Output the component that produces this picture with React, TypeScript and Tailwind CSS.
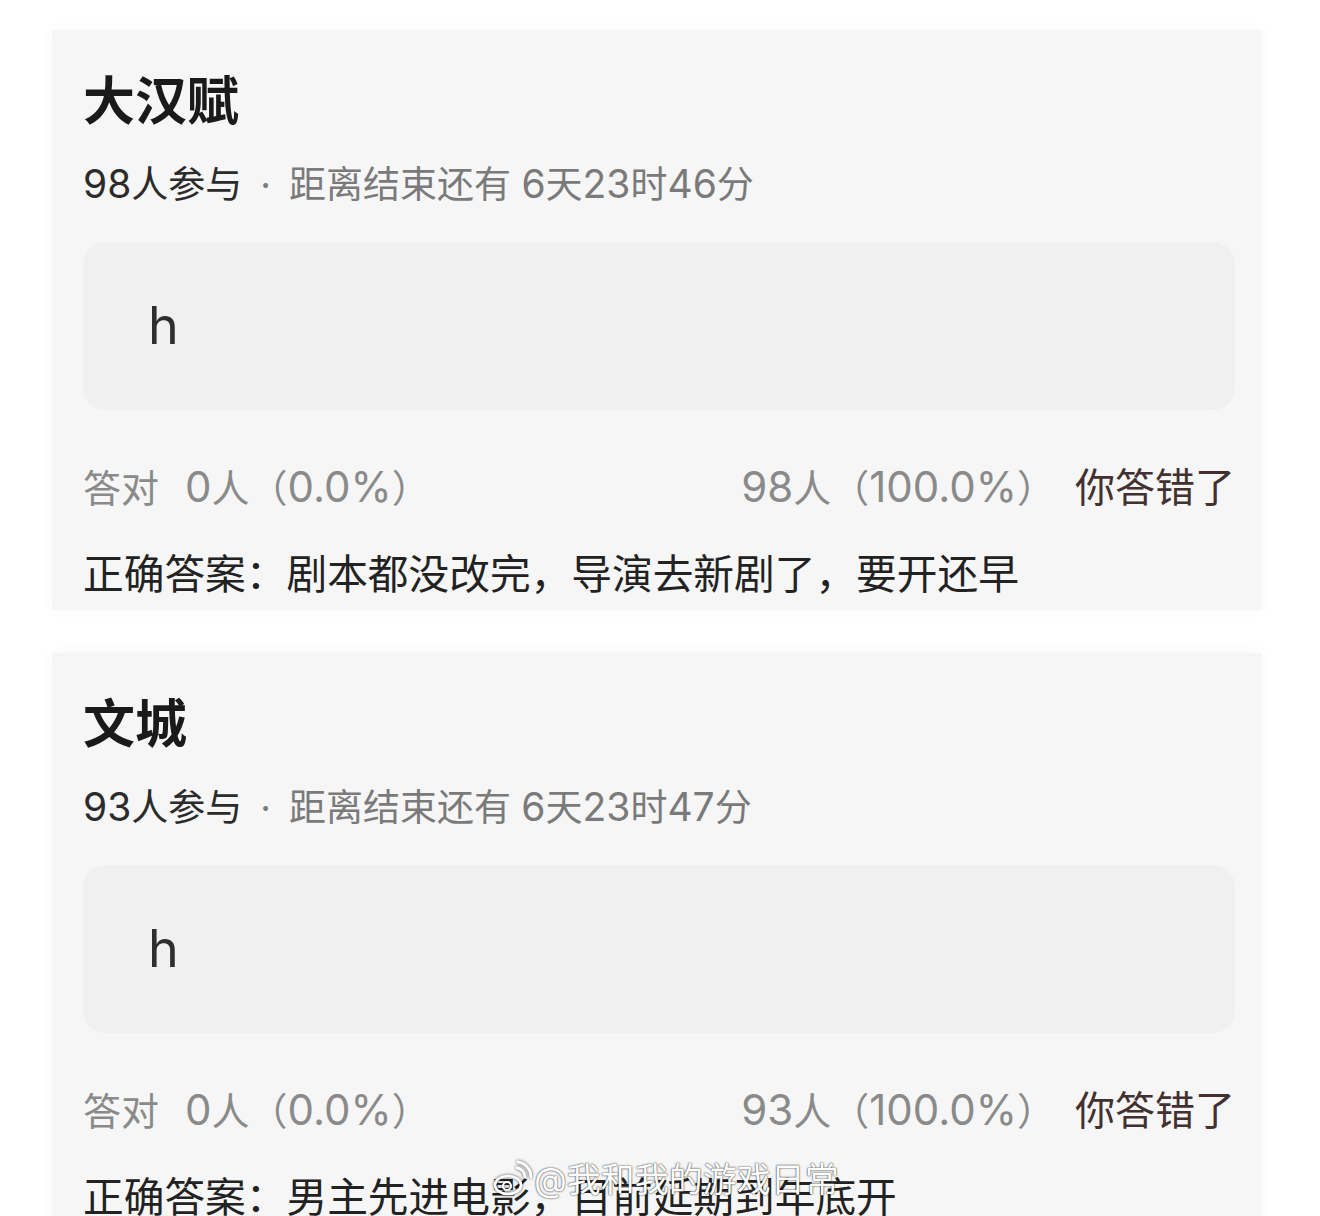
import React from 'react';

interface QuizCardProps {
  title: string;
  joined: number;
  remaining: string;
  answer: string;
  correct: number;
  correctRate: string;
  wrong: number;
  wrongRate: string;
}

// Inter for the digits and latin letters, Noto CJK for everything else
const FONT = "font-['Inter','Noto_Sans_CJK_SC',sans-serif]";

// digits sit a little larger than the CJK text around them
const Num = ({ children, size }: { children: React.ReactNode; size: 'sm' | 'lg' }) => (
  <span className={size === 'sm' ? 'text-[39px] leading-none' : 'text-[42px] leading-none'}>
    {children}
  </span>
);

const QuizCard = ({
  title,
  joined,
  remaining,
  answer,
  correct,
  correctRate,
  wrong,
  wrongRate,
}: QuizCardProps) => {
  const [days, rest] = remaining.split('天');
  const [hours, mins] = rest.replace('分', '').split('时');

  return (
    <div className="w-[1210px] ml-[52px] bg-[#f6f6f6] pl-[31px] pr-[27px] pt-[46px] pb-[14px] shadow-[0_0_14px_rgba(0,0,0,0.035)]">
      <h2 className="text-[52px] leading-none font-bold text-[#1a1a1a]">{title}</h2>
      <p className="mt-[36px] h-[37px] text-[37px] leading-none text-[#7a7a7a] whitespace-nowrap">
        <span className="text-[#2b2b2b]">
          <Num size="sm">{joined}</Num>人参与
        </span>
        <span className="mx-[18px]">·</span>
        <span>
          距离结束还有 <Num size="sm">{days}</Num>天<Num size="sm">{hours}</Num>时
          <Num size="sm">{mins}</Num>分
        </span>
      </p>

      {/* the user's own guess */}
      <div className="mt-[41px] h-[168px] rounded-[22px] bg-[#f0f0f0] flex items-center pl-[65px]">
        <span className="text-[52px] leading-none text-[#2e2e2e]">h</span>
      </div>

      <div className="mt-[58px] h-[38px] flex items-center justify-between text-[38px] leading-none text-[#8a8a8a] whitespace-nowrap">
        <div className="flex items-baseline">
          <span className="mr-[26px]">答对</span>
          <span>
            <Num size="lg">{correct}</Num>人（<Num size="lg">{correctRate}</Num>）
          </span>
        </div>
        <div className="flex items-baseline gap-[20px]">
          <span>
            <Num size="lg">{wrong}</Num>人（<Num size="lg">{wrongRate}</Num>）
          </span>
          <span className="text-[40px] text-[#433030]">你答错了</span>
        </div>
      </div>

      <p className="mt-[49px] text-[40.7px] leading-none text-[#222] whitespace-nowrap">
        正确答案：{answer}
      </p>
    </div>
  );
};

const WeiboMark = () => (
  <svg
    width="40"
    height="40"
    viewBox="0 0 40 40"
    fill="none"
    className="drop-shadow-[0_0_1.5px_rgba(0,0,0,0.7)]"
  >
    <ellipse cx="16" cy="25" rx="13" ry="9" stroke="#fff" strokeWidth="2.6" />
    <circle cx="15" cy="26" r="4" stroke="#fff" strokeWidth="2.2" />
    <path d="M25 8a9 9 0 0 1 8 9" stroke="#fff" strokeWidth="2.8" strokeLinecap="round" />
    <path d="M26 2a15 15 0 0 1 13 15" stroke="#fff" strokeWidth="2.8" strokeLinecap="round" />
  </svg>
);

export default function App() {
  return (
    <div className={`relative w-[1320px] h-[1216px] overflow-hidden bg-white ${FONT}`}>
      <div className="flex flex-col gap-[43px] pt-[30px]">
        <QuizCard
          title="大汉赋"
          joined={98}
          remaining="6天23时46分"
          answer="剧本都没改完，导演去新剧了，要开还早"
          correct={0}
          correctRate="0.0%"
          wrong={98}
          wrongRate="100.0%"
        />
        <QuizCard
          title="文城"
          joined={93}
          remaining="6天23时47分"
          answer="男主先进电影，目前延期到年底开"
          correct={0}
          correctRate="0.0%"
          wrong={93}
          wrongRate="100.0%"
        />
      </div>

      {/* weibo watermark */}
      <div className="absolute left-[492px] top-[1160px] flex items-center gap-[2px] text-white text-[34px] leading-none [text-shadow:0_0_2px_rgba(0,0,0,0.7),0_0_1px_rgba(0,0,0,0.6)]">
        <WeiboMark />
        <span>@我和我的游戏日常</span>
      </div>
    </div>
  );
}
